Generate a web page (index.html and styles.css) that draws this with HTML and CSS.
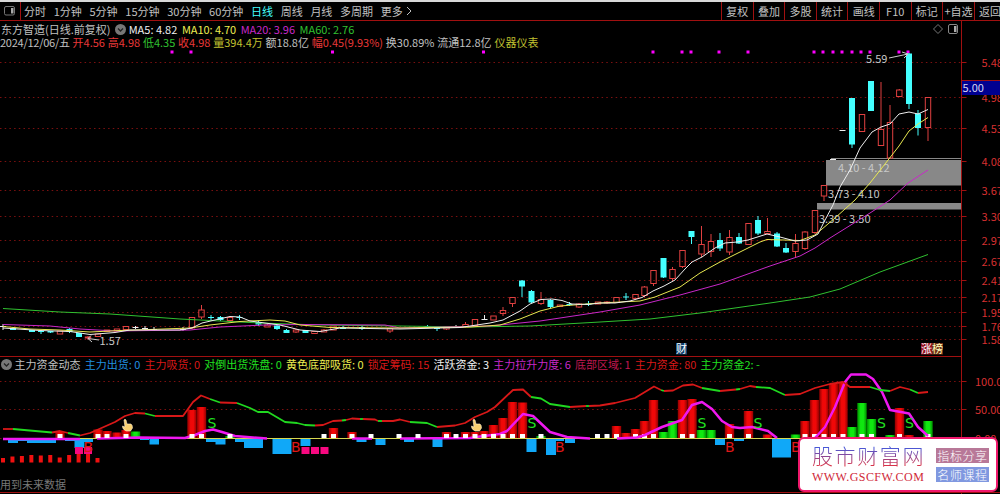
FILE: index.html
```
<!DOCTYPE html>
<html lang="zh-CN">

<head>
    <meta charset="UTF-8">
    <title>东方智造 日线</title>
    <link rel="stylesheet" href="styles.css">
</head>

<body>
    <div class="toolbar">
        <div class="panel-toggle">
            <svg width="12" height="10" viewBox="0 0 12 10">
                <rect x="0.5" y="0.5" width="10" height="8.5" rx="1.5" fill="none" stroke="#777"/>
                <rect x="7" y="2" width="2.5" height="5.5" fill="#aaa"/>
            </svg>
        </div>
        <div class="periods">
            <span>分时</span>
            <span>1分钟</span>
            <span>5分钟</span>
            <span>15分钟</span>
            <span>30分钟</span>
            <span>60分钟</span>
            <span class="active">日线</span>
            <span>周线</span>
            <span>月线</span>
            <span>多周期</span>
            <span class="more">更多<svg width="6" height="10" viewBox="0 0 6 10"><path d="M1 1l4 4-4 4" fill="none" stroke="#c0c0c0"/></svg></span>
        </div>
        <div class="tools">
            <span>复权</span>
            <span>叠加</span>
            <span>多股</span>
            <span>统计</span>
            <span>画线</span>
            <span>F10</span>
            <span>标记</span>
            <span>+自选</span>
            <span>返回</span>
        </div>
    </div>

    <div class="panel price">
        <div class="legend">
            <div class="row">
                <span>东方智造(日线.前复权)</span>
                <svg class="drop" width="11" height="11" viewBox="0 0 11 11"><circle cx="5.5" cy="5.5" r="5.5" fill="#777"/><path d="M3 4.5l2.5 2.5L8 4.5" fill="none" stroke="#222" stroke-width="1.3"/></svg>
                <span class="white">MA5: 4.82</span>
                <span class="yellow">MA10: 4.70</span>
                <span class="magenta">MA20: 3.96</span>
                <span class="green">MA60: 2.76</span>
                <svg class="corner" width="26" height="12" viewBox="0 0 26 12">
                    <path d="M5 1.500L9.500 6 5 10.500.5 6z" fill="none" stroke="#777"/>
                    <rect x="15.5" y="1.5" width="9" height="9" rx="1.5" fill="none" stroke="#888"/>
                    <rect x="21" y="3" width="2.5" height="6" fill="#aaa"/>
                </svg>
            </div>
            <div class="row quote">
                <span class="date">2024/12/06/五</span>
                <span class="red">开4.56</span>
                <span class="red">高4.98</span>
                <span class="green">低4.35</span>
                <span class="red">收4.98</span>
                <span class="gold">量394.4万</span>
                <span>额18.8亿</span>
                <span class="red">幅0.45(9.93%)</span>
                <span>换30.89%</span>
                <span>流通12.8亿</span>
                <span class="gold">仪器仪表</span>
            </div>
        </div>
        <svg id="price" width="1000" height="307" viewBox="0 49 1000 307"></svg>
    </div>

    <div class="panel flow">
        <div class="legend">
            <div class="row">
                <svg class="drop" width="11" height="11" viewBox="0 0 11 11"><circle cx="5.5" cy="5.5" r="5.5" fill="#777"/><path d="M3 4.5l2.5 2.5L8 4.5" fill="none" stroke="#222" stroke-width="1.3"/></svg>
                <span>主力资金动态</span>
                <span class="blue">主力出货: 0</span>
                <span class="darkred">主力吸货: 0</span>
                <span class="lime">对倒出货洗盘: 0</span>
                <span class="yellow">黄色底部吸货: 0</span>
                <span class="darkred">锁定筹码: 15</span>
                <span class="white">活跃资金: 3</span>
                <span class="magenta">主力拉升力度: 6</span>
                <span class="wine">底部区域: 1</span>
                <span class="darkred">主力资金: 80</span>
                <span class="lime">主力资金2: -</span>
            </div>
        </div>
        <svg id="flow" width="1000" height="122" viewBox="0 372 1000 122"></svg>
    </div>

    <div class="watermark">
        <div class="site">
            <div class="name">股市财富网</div>
            <div class="url">WWW.GSCFW.COM</div>
        </div>
        <div class="tags">
            <span class="tag pink">指标分享</span>
            <span class="tag indigo">名师课程</span>
        </div>
    </div>

    <script src="chart.js"></script>
</body>

</html>
```
FILE: styles.css
```
html,
body {
    margin: 0;
    height: 100%;
    background: #000;
    overflow: hidden;
}

body {
    position: relative;
    width: 1000px;
    height: 494px;
    color: #c0c0c0;
    font-family: "Noto Sans CJK SC", sans-serif;
    font-size: 11px;
    white-space: nowrap;
}

svg {
    display: block;
}

/* toolbar */
.toolbar {
    box-sizing: border-box;
    display: flex;
    height: 21px;
    border-top: 2px solid #d8d8d8;
    border-bottom: 1px solid #a01010;
    line-height: 18px;
}

.panel-toggle {
    box-sizing: border-box;
    width: 21px;
    padding: 4px 0 0 4px;
    border-right: 1px solid #a01010;
}

.periods {
    display: flex;
    gap: 7.7px;
    padding-left: 3px;
}

.periods .active {
    color: #4ff;
}

.more {
    display: flex;
    align-items: center;
    gap: 3px;
}

.tools {
    display: flex;
    margin-left: auto;
    width: 279px;
    overflow: hidden;
}

.tools span {
    box-sizing: border-box;
    flex: 0 0 31.6px;
    border-left: 1px solid #a01010;
    text-align: center;
}

/* panels */
.panel {
    box-sizing: border-box;
}

.legend {
    box-sizing: border-box;
    width: 962px;
    border-right: 1px solid #a01010;
}

.row {
    display: flex;
    align-items: center;
    gap: 4.6px;
}

.price .legend {
    height: 28px;
    padding: 1px 0 0 1px;
}

.price .row {
    height: 14px;
    line-height: 14px;
}

.price .row .yellow,
.price .row .magenta {
    letter-spacing: -0.05px;
}

.price .quote {
    height: 13px;
    line-height: 13px;
    gap: 2.8px;
}

.drop {
    flex: none;
}

.price .drop {
    margin-right: -2px;
}

.corner {
    margin: 0 2px 0 auto;
}

.date {
    margin-left: -1px;
    letter-spacing: -0.25px;
}

.flow .legend {
    height: 16px;
    padding-left: 1px;
    border-top: 1px solid #a01010;
}

.flow .row {
    height: 15px;
    line-height: 15px;
    gap: 4.1px;
}

.flow .drop {
    margin-right: -1.5px;
}

.white { color: #f0f0f0; }
.yellow { color: #eeee50; }
.gold { color: #c0c030; }
.magenta { color: #c828c8; }
.green { color: #30c030; }
.lime { color: #20e020; }
.blue { color: #2090e0; }
.red { color: #e83838; }
.darkred { color: #d81818; }
.wine { color: #c01850; }

/* watermark */
.watermark {
    position: absolute;
    left: 798px;
    top: 437px;
    box-sizing: border-box;
    display: flex;
    width: 200px;
    height: 55px;
    padding: 3px 0 0 12px;
    background: #fff;
    border: 2px solid #f0186c;
    border-radius: 6px;
}

.site {
    width: 124px;
}

.name {
    height: 29px;
    font-size: 21px;
    font-weight: 300;
    line-height: 26px;
    letter-spacing: 1.6px;
    color: transparent;
    background: linear-gradient(#4858d8 20%, #e03040 85%);
    -webkit-background-clip: text;
    background-clip: text;
}

.url {
    font-family: "Liberation Serif", serif;
    font-size: 12px;
    line-height: 13px;
    letter-spacing: 0.45px;
    color: #d02838;
}

.tags {
    display: flex;
    flex-direction: column;
    gap: 4px;
    padding-top: 6px;
}

.tag {
    width: 53px;
    height: 15px;
    font-size: 12px;
    font-weight: 300;
    line-height: 15px;
    letter-spacing: 0.6px;
    text-align: center;
    color: #fff;
}

.pink { background: #b87898; }
.indigo { background: #8098e0; }

/* chart text */
svg text {
    font-family: "Noto Sans CJK SC", sans-serif;
    font-size: 11px;
}

.axis { fill: #d83030; }
.note { fill: #c8c8c8; }
svg .sig {
    font-family: "DejaVu Sans", sans-serif;
    font-size: 14px;
}
.dim { fill: #777; }
```
FILE: chart.js
```
const price = document.getElementById('price');
const flow = document.getElementById('flow');
const NS = 'http://www.w3.org/2000/svg';
const AXIS = 961.5;

function add(parent, tag, attrs, text) {
    const el = document.createElementNS(NS, tag);
    for (const k in attrs) el.setAttribute(k, attrs[k]);
    if (text) el.textContent = text;
    parent.appendChild(el);
    return el;
}

function rect(parent, x, y, width, height, fill) {
    add(parent, 'rect', { x, y, width, height, fill });
}

function line(parent, points, stroke, width) {
    add(parent, 'polyline', { points, stroke, 'stroke-width': width || 1, fill: 'none', 'stroke-linejoin': 'round' });
}

function grid(parent, rows, x) {
    rows.forEach(([y, label]) => {
        add(parent, 'line', { x1: 0, x2: AXIS, y1: y, y2: y, stroke: '#7c1010', 'stroke-dasharray': '1.5 3.2' });
        add(parent, 'line', { x1: AXIS, x2: AXIS + 5, y1: y, y2: y, stroke: '#a01010' });
        add(parent, 'text', { x, y: y + 4, class: 'axis' }, label);
    });
}

/* ---------- price panel ---------- */
grid(price, [[62.5, '5.48'], [97.5, '4.98'], [128.5, '4.53'], [161.5, '4.08'], [190.5, '3.67'], [216.5, '3.30'],
    [240.5, '2.97'], [261.5, '2.67'], [280.5, '2.41'], [297.5, '2.17'], [312.5, '1.95'], [326.5, '1.76'], [339.5, '1.58']], 981.5);
line(price, `${AXIS},49 ${AXIS},356`, '#a01010');
rect(price, 962, 81, 38, 14, '#000090');
line(price, '962,80.5 1000,80.5', '#a01010');
add(price, 'text', { x: 962.5, y: 91.5, fill: '#d8d8f0' }, '5.00');

[172, 191, 332.5, 483.5, 653, 682, 691, 719, 748, 814, 823, 833, 842, 852, 861, 870, 899, 908]
    .forEach(x => rect(price, x - 1.5, 50.5, 3, 3, '#f0f'));

// price gaps
rect(price, 826, 160, 135, 25.5, '#888');
line(price, '831,158.5 961,158.5', '#888');
rect(price, 817, 203, 144, 6.5, '#888');

// x, body top, body bottom, high, low, type (r = up, c = down, w = flat)
const candles = [
    [3, 326, 327, 324, 330, 'w'], [13, 328, 330, 327, 330, 'c'], [32, 330, 332, 330, 332, 'c'], [41, 331, 332, 330, 334, 'c'],
    [50.5, 331, 332.5, 331, 333, 'c'], [60, 331, 334, 331, 334, 'r'], [69.5, 329, 332, 328, 333, 'c'], [79, 333, 337, 333, 337, 'c'],
    [88, 337, 338, 336, 340, 'r'], [98, 334, 336.5, 334, 337, 'r'], [107, 330, 331.5, 330, 332, 'r'], [117, 329, 331, 329, 332, 'r'],
    [126, 326.5, 329.5, 326, 330, 'r'], [135.5, 327, 328, 326, 329, 'w'], [145, 328, 329, 326, 330, 'w'], [154, 329, 330, 327, 331, 'w'],
    [183, 329, 330, 327, 331, 'w'], [192, 317.5, 328, 317, 329, 'r'], [201.5, 310, 317, 305, 319, 'r'], [211, 317, 318, 315, 320, 'c'],
    [220.5, 317, 320, 316, 321, 'c'], [230, 317.5, 320.5, 316, 321, 'r'], [239.5, 317, 318, 315, 320, 'c'], [258.5, 322, 324.5, 320, 326, 'c'],
    [267.5, 325, 327, 324, 327, 'r'], [277, 325.5, 329, 325, 330, 'c'], [286.5, 330, 333, 329, 333, 'c'], [296, 330, 332, 329, 333, 'r'],
    [305.5, 330, 333, 330, 333, 'c'], [314.5, 331.5, 333.5, 331, 334, 'r'], [324, 330, 332, 329, 332, 'r'], [333.5, 326, 330, 326, 330, 'r'],
    [343, 327, 329, 326, 329, 'c'], [362, 327, 329, 326, 330, 'c'], [390, 328.5, 331, 328, 333, 'r'], [427.5, 326, 327.5, 325, 328, 'c'],
    [437, 327, 329, 327, 331, 'c'], [446.5, 326.5, 329, 326, 330, 'r'], [456, 327, 328, 325, 328, 'w'], [465.5, 324.5, 327, 322, 328, 'r'],
    [475, 319.5, 325.5, 319, 326, 'r'], [484.5, 319, 320, 315, 320, 'w'], [493.5, 316, 320, 316, 320, 'r'], [503, 310.5, 313.5, 307, 316, 'r'],
    [512.5, 297.5, 303.5, 297, 307, 'r'], [522, 280.5, 286.5, 280, 297, 'c'], [531.5, 291, 302.5, 290, 303, 'c'], [541, 299.5, 303.5, 292, 305, 'r'],
    [550.5, 300, 307, 299, 308, 'c'], [560, 305, 306.5, 305, 307, 'r'], [569.5, 304, 305, 302, 306, 'c'], [579, 304, 307, 303, 308, 'r'],
    [588.5, 303.5, 304.5, 301, 306, 'c'], [598, 302, 304, 302, 304, 'r'], [607, 302, 303, 301, 304, 'r'], [616.5, 297.5, 302.5, 297, 303, 'r'],
    [626, 296.5, 297.5, 293, 300, 'c'], [635.5, 294.5, 298.5, 294, 299, 'r'], [644.5, 287, 295.5, 286, 297, 'r'], [653.5, 270.5, 283.5, 270, 286, 'r'],
    [663.5, 258, 277.5, 258, 278, 'c'], [672.5, 269.5, 278.5, 267, 281, 'r'], [682.5, 250.5, 266.5, 250, 268, 'r'], [691.5, 231, 237, 231, 244, 'c'],
    [701.5, 244.5, 254, 226, 257, 'r'], [711, 241.5, 251.5, 234, 257, 'r'], [720, 240, 248.5, 233, 251, 'c'], [729.5, 237.5, 252, 230, 255, 'r'],
    [739, 237, 243.5, 233, 244, 'c'], [748.5, 223.5, 244.5, 223, 245, 'r'], [758, 220, 233.5, 216, 235, 'c'], [767.5, 231.5, 233.5, 218, 234, 'r'],
    [777, 233.5, 246.5, 232, 247, 'c'], [786, 248, 252.5, 243, 253, 'c'], [795.5, 243.5, 251.5, 234, 257, 'r'], [805, 232, 248.5, 231, 250, 'r'],
    [815, 210.5, 232.5, 210, 234, 'r'], [824, 185.5, 196, 185, 201, 'r'], [833, 159, 160, 159, 160, 'w'], [842.5, 130, 131, 130, 131, 'w'],
    [852, 98, 144.5, 98, 148, 'c'], [862, 114.5, 131.5, 114, 132, 'r'], [871, 81, 111, 81, 111, 'c'], [881, 129.5, 145.5, 82, 146, 'r'],
    [890, 122.5, 158, 105, 158, 'r'], [899.3, 90, 96.5, 89, 97, 'r'], [909, 53.5, 104, 53, 109, 'c'], [918, 113.5, 128, 110, 135.5, 'c'],
    [928, 97.5, 127.5, 97, 141, 'r']
];
const colors = { r: '#e04040', c: '#4ff', w: '#eee' };

candles.forEach(([x, top, bottom, high, low, type]) => {
    const c = colors[type];
    if (type === 'r') {
        line(price, `${x},${high} ${x},${top}`, c);
        line(price, `${x},${bottom} ${x},${low}`, c);
        add(price, 'rect', { x: x - 2.7, y: top, width: 5.4, height: bottom - top, fill: 'none', stroke: c });
    } else {
        line(price, `${x},${high} ${x},${low}`, c);
        rect(price, x - 3, top, 6, bottom - top, c);
    }
});

// labels of the gaps
add(price, 'text', { x: 838, y: 172, class: 'note' }, '4.10 - 4.12');
add(price, 'text', { x: 828, y: 198, class: 'note' }, '3.73 - 4.10');
add(price, 'text', { x: 819, y: 222.5, class: 'note' }, '3.39 - 3.50');

// moving averages
line(price, '3,308.5 60,312 110,314 180,319 260,323 320,325 400,326 470,327 530,326 600,322 650,319 700,313 770,303 810,297 840,289 880,272 928,254.5', '#30c030');
line(price, '3,324.5 50,326 80,329 115,331 190,330 220,327 265,325 300,324.5 385,325 400,328 490,326 540,321 600,312 640,305 680,295 720,284 770,266 800,256 815,248 830,238 870,213 890,200 908,183 928,170', '#c828c8');
line(price, '3,326.5 30,329 60,330 90,332 120,330.5 150,329.5 190,328 210,325 240,321.5 270,320 285,321 300,325 330,327.5 400,328 470,327 500,325 520,319 540,311 560,306 600,303 640,301 655,297 680,287 700,273 720,262 740,252 760,242 767,239.5 800,240.5 815,235 835,218 855,200 870,183 885,164 899,146 909,131 918,124 928,117.5', '#e8e850');
line(price, '3,328 40,330.5 70,331.5 90,334.5 115,332.5 130,330 180,330 192,328 202,323 215,320 230,316.5 240,317 250,321 265,323 280,325 300,330 320,331.5 340,328 400,329 460,327.5 470,326 490,323 503,320 520,311 530,304 541,299.5 552,299 562,300.5 572,304 588,304.5 600,303 615,303 630,301 642,297.5 653,291 664,286 675,280 685,269 692,262 702,257 715,248 725,243 737,242 748,240 767,234 780,237 795,241 807,240 818,234 824,222 833,205 840,187 850,170 860,148 872,132 881,127 890,124 899,114 909,112 918,114 928,109.5', '#eee');

add(price, 'text', { x: 866, y: 62.5, class: 'note' }, '5.59');
line(price, '889,58 908,54', '#ccc');
line(price, '902,52 908,54 904,58', '#ccc');
add(price, 'text', { x: 99.5, y: 345, class: 'note' }, '1.57');
line(price, '99,340 88,338.5', '#ccc');
line(price, '91,335.5 88,338.5 92,342', '#ccc');

rect(price, 676, 343, 11, 11.5, '#10406c');
add(price, 'text', { x: 676, y: 353, fill: '#fff' }, '财');
rect(price, 921, 343, 11, 11.5, '#901020');
rect(price, 932, 343, 11, 11.5, '#703018');
add(price, 'text', { x: 921, y: 353, fill: '#fff' }, '涨');
add(price, 'text', { x: 932, y: 353, fill: '#ffb' }, '榜');

/* ---------- money flow panel ---------- */
const defs = add(flow, 'defs', {});
[['red', '#900000', '#f00808'], ['green', '#009000', '#10e810']].forEach(([id, dark, light]) => {
    const g = add(defs, 'linearGradient', { id });
    [[0, dark], [0.35, light], [0.65, light], [1, dark]].forEach(([offset, color]) => add(g, 'stop', { offset, 'stop-color': color }));
});

grid(flow, [[381.5, '100.0'], [409.5, '50.00'], [438.5, '0.00']], 975);
line(flow, `${AXIS},372 ${AXIS},494`, '#a01010');
line(flow, '0,492.5 1000,492.5', '#a01010');

[[60, 432], [98, 429.5], [107, 431], [117, 432.5], [126, 430], [192, 410], [201.5, 407], [333.5, 428], [352, 432], [446.5, 432],
    [465.5, 432], [475, 432], [484, 431], [493.5, 425], [503, 418], [512.5, 402], [522.5, 402.5], [579, 437], [616.5, 426], [626, 433],
    [635.5, 429], [644.5, 421], [653.5, 400], [682.5, 400], [692, 399], [729.5, 424], [748.5, 411], [767.5, 434.5], [805, 421],
    [814.5, 400], [824, 389], [833.5, 384], [843, 382], [899.5, 408], [909, 435]]
    .forEach(([x, y]) => rect(flow, x - 4.7, y, 9.4, 438 - y, 'url(#red)'));
[[135.5, 431.5], [230, 436], [541, 436], [663.5, 432], [672.5, 421], [701.5, 430], [711, 430], [795.5, 434.5], [852, 427], [862, 403],
    [871.5, 419], [890, 435], [928, 421]]
    .forEach(([x, y]) => rect(flow, x - 4.7, y, 9.4, 438 - y, 'url(#green)'));

// outflow: left, width, bottom
[[8, 10, 443], [18, 9, 441], [27, 29, 443], [65, 10, 441], [74.5, 10, 448], [84, 9, 442], [140, 9, 440], [149.5, 9.5, 444.5],
    [206, 10, 442], [215.5, 10, 444.5], [235, 9, 442], [244, 19, 448], [272.5, 19, 454], [300.5, 10, 446], [356.5, 10, 442],
    [375.5, 10, 445], [404, 10, 442], [432.5, 10, 447], [526.5, 10, 452], [546, 10, 455], [556, 8, 441], [565, 10, 443], [715, 10, 445],
    [734, 10, 441], [772, 19, 457.5]]
    .forEach(([x, w, y]) => rect(flow, x, 439, w, y - 439, '#10a8f8'));

line(flow, '3,438.5 961,438.5', '#d8d850');

line(flow, '3,439 80,439', '#f018f0', 2.5);
line(flow, '97,438.5 140,437.5 185,438 195,435 205,431 213,429.5 222,432 235,436 267,438.5', '#f018f0', 2.5);
line(flow, '352,438.5 372,438.5', '#f018f0', 2.5);
line(flow, '400,438.5 470,438 480,436.5 500,434 507,431 523,414 533,416 550,432 567,437 590,438.5', '#f018f0', 2.5);

[60, 98, 107, 126, 192, 201.5, 230, 324, 333.5, 352, 371, 399, 418, 446.5, 456, 465.5, 475, 484, 493.5, 503, 512.5, 522.5, 541, 597.5,
    607, 616.5, 635.5, 644.5, 653.5, 682.5, 692, 729.5, 748.5, 805, 814.5, 824, 833.5, 843, 862, 871.5, 899.5, 928]
    .forEach(x => rect(flow, x - 2.5, 434, 5, 4, '#fff'));

line(flow, '617,438.5 637,437.5 645,435 662,427 682,420 692,405 702,402 712,409 722,421 732,427 740,428 752,427 768,431 777,438', '#f018f0', 2.5);
line(flow, '815,438 825,427 835,407 845,382 851,374.5 866,374.5 873,379 882,392 890,410 909,413.5 918,427 928,436', '#f018f0', 2.5);

// trend: red while rising, green while falling
[['r', '3,429 13,429'], ['g', '13,429 52,432.5'], ['r', '52,432.5 60,431 68,433'], ['g', '68,433 80,435.5'],
    ['r', '80,435.5 90,433 97,430 115,422 125,416 135,413 145,413.5'], ['g', '145,413.5 155,416'],
    ['r', '155,416 183,416 193,402 201,395.5 210,399'], ['g', '210,399 220,402.5'], ['r', '220,402.5 237,403'],
    ['g', '237,403 250,408 258,412 268,412 285,422 297,423 305,425 315,425.5'],
    ['r', '315,425.5 323,425 333,421 342,420.5'], ['g', '342,420.5 346,420'], ['r', '346,420 352,418.5 360,419'], ['g', '360,419 363,419'],
    ['r', '363,419 375,419.5 378,421'], ['g', '378,421 382,421'], ['r', '382,421 393,421 400,419.5 410,422'],
    ['g', '410,422 427,423 437,427'], ['r', '437,427 455,425.5 465,423 475,417 487,412 495,407 513,390 523,389.5 531,397'],
    ['g', '531,397 541,398.5 550,404 570,407'], ['r', '570,407 586,406'], ['g', '586,406 589,406'],
    ['r', '589,406 600,405.5 615,403 635,398 654,386.5 661,390'], ['g', '661,390 664,391'],
    ['r', '664,391 673,390.5 683,385.5 693,384.5 702,388'], ['g', '702,388 720,391'], ['r', '720,391 736,389.5'], ['g', '736,389.5 740,389'],
    ['r', '740,389 750,386 756,387'], ['g', '756,387 770,388 785,395'], ['r', '785,395 800,394 815,388 830,384 843,382 850,387 870,387'],
    ['g', '870,387 880,390 890,391'], ['r', '890,391 900,387 910,389.5'], ['g', '910,389.5 918,393'], ['r', '918,393 928,392']]
    .forEach(([c, pts]) => line(flow, pts, c === 'r' ? '#d81818' : '#20d820', 1.8));

rect(flow, 75, 447, 8, 7, '#f80880');
rect(flow, 84, 447, 8, 7, '#f80880');
[301.5, 311, 320.5].forEach(x => rect(flow, x, 447, 8, 7, '#f80880'));

[458, 456.5, 456, 455, 455.5, 455, 457.5, 455, 454, 454, 458]
    .forEach((y, i) => rect(flow, 1 + i * 9.45, y, 4, 462.5 - y, '#f01010'));

[88, 295.5, 559.5, 729.5, 795.5].forEach(x => add(flow, 'text', { x: x - 4.5, y: 451.5, class: 'sig', fill: '#e01818' }, 'B'));
[212, 532, 702, 758, 881.5, 909.5].forEach(x => add(flow, 'text', { x: x - 4.5, y: 427.5, class: 'sig', fill: '#20e020' }, 'S'));

[127, 476].forEach(x => add(flow, 'path', {
    transform: `translate(${x - 6} 419)`,
    d: 'M3 1Q4-.5 5 1L6 5 10 5Q11.500 6 11.500 9L9.500 12 5 12Q1 10 1.500 7L4 8z',
    fill: '#f8d070', stroke: '#fff0d0', 'stroke-width': 0.6
}));

add(flow, 'text', { x: 0, y: 489, class: 'dim' }, '用到未来数据');
```
